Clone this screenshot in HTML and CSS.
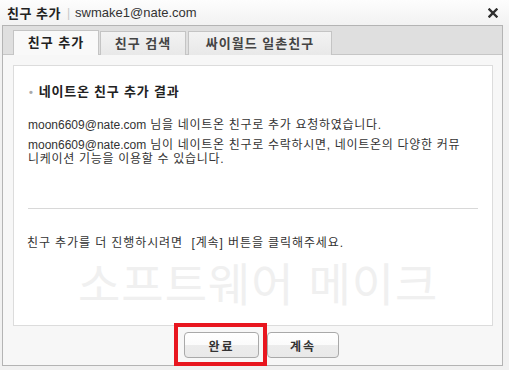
FILE: index.html
```html
<!DOCTYPE html>
<html>
<head>
  <meta charset="UTF-8" />
  <title>친구 추가</title>
  <link rel="stylesheet" href="styles.css">
</head>
<body>

  <div class="window">
    <!-- Title bar -->
    <div class="titlebar">
      <strong class="title">친구 추가</strong>
      <span class="sep">|</span>
      <span class="account">swmake1@nate.com</span>
      <span class="close" title="닫기">
        <svg width="10" height="10" viewBox="0 0 10 10">
          <path d="M1.5 1.5 L8.5 8.5 M8.5 1.5 L1.5 8.5" stroke="#2f2f2f" stroke-width="2.4" stroke-linecap="square" fill="none" />
        </svg>
      </span>
    </div>

    <div class="frame">
      <!-- Tabs -->
      <div class="tabs">
        <div class="tab active tab-add">친구 추가</div>
        <div class="tab tab-search">친구 검색</div>
        <div class="tab tab-cy">싸이월드 일촌친구</div>
      </div>

      <div class="content">
        <div class="box">
          <h4 class="box-title"><span class="dot">•</span>네이트온 친구 추가 결과</h4>
          <p class="msg first"><span class="email">moon6609@nate.com</span> 님을 네이트온 친구로 추가 요청하였습니다.</p>
          <p class="msg"><span class="email">moon6609@nate.com</span> 님이 네이트온 친구로 수락하시면, 네이트온의 다양한 커뮤<br>니케이션 기능을 이용할 수 있습니다.</p>
          <hr class="divider">
          <p class="msg next">친구 추가를 더 진행하시려면 &nbsp;[계속] 버튼을 클릭해주세요.</p>
          <div class="watermark">소프트웨어 메이크</div>
        </div>

        <div class="button-group">
          <button type="button" class="btn btn-done">완료</button>
          <button type="button" class="btn btn-next">계속</button>
        </div>
      </div>
    </div>

    <!-- highlight annotation -->
    <div class="highlight"></div>
  </div>

</body>
</html>
```

FILE: styles.css
```css
html, body {
  margin: 0;
  padding: 0;
}

body {
  font-family: "Liberation Sans", "Noto Sans CJK KR", sans-serif;
  font-size: 12px;
  color: #333;
  background: #f1f1f1;
}

.window {
  position: relative;
  width: 509px;
  height: 370px;
  background: #f1f1f1;
  overflow: hidden;
}

/* Title bar */
.titlebar {
  display: flex;
  align-items: center;
  height: 25px;
  padding-left: 7px;
  background: linear-gradient(#fdfdfd, #f2f2f2);
}

.title {
  font-size: 13px;
  color: #222;
  letter-spacing: 0.5px;
}

.sep {
  color: #c8c8c8;
  margin: 0 5px 0 6px;
  font-size: 12px;
}

.account {
  font-size: 13px;
  color: #333;
}

.close {
  margin-left: auto;
  margin-right: 11px;
  display: flex;
  align-items: center;
  cursor: pointer;
}

/* Frame */
.frame {
  margin-left: 2px;
  width: 499px;
  height: 339px;
  border: 1px solid #b4b4b4;
  background: #f7f7f7;
}

.tabs {
  display: flex;
  align-items: flex-end;
  gap: 1px;
  height: 28px;
  padding-left: 10px;
  background: #dfdfdf;
  border-bottom: 1px solid #c6c6c6;
}

.tab {
  box-sizing: border-box;
  height: 24px;
  margin-bottom: -1px;
  border: 1px solid #c4c4c4;
  border-bottom: none;
  background: linear-gradient(#f3f3f3, #e8e8e8);
  font-size: 13px;
  font-weight: bold;
  color: #444;
  text-align: center;
  line-height: 24px;
  letter-spacing: 1px;
  cursor: pointer;
}

.tab.active {
  background: #f9f9f9;
  color: #222;
  height: 25px;
}

.tab-add { width: 86px; }
.tab-search { width: 86px; }
.tab-cy { width: 144px; margin-left: 1px; }

.content {
  padding: 10px 9px 0 10px;
}

.box {
  box-sizing: border-box;
  height: 261px;
  padding: 18px 14px 0 14px;
  background: #fff;
  border: 1px solid #dcdcdc;
  overflow: hidden;
}

.box-title {
  margin: 0;
  font-size: 13px;
  line-height: 16px;
  color: #222;
  letter-spacing: 0.8px;
}

.dot {
  color: #aaa;
  font-size: 11px;
  margin: 0 5px 0 1px;
}

.msg {
  margin: 0;
  font-size: 12px;
  line-height: 14px;
  color: #333;
  letter-spacing: 0.7px;
}

.email {
  letter-spacing: 0;
}

.msg.first {
  margin-top: 18px;
  margin-bottom: 6px;
}

.divider {
  margin: 42px 0 0 0;
  border: none;
  border-top: 1px solid #d8d8d8;
  width: 450px;
}

.msg.next {
  margin-top: 27px;
  margin-left: -1px;
  letter-spacing: 0.9px;
}

.watermark {
  margin-top: 8px;
  margin-left: 50px;
  font-size: 46px;
  line-height: 54px;
  color: #f0f0f0;
  letter-spacing: 1px;
}

/* Buttons */
.button-group {
  display: flex;
  gap: 8px;
  padding-left: 171px;
  margin-top: 6px;
}

.btn {
  box-sizing: border-box;
  height: 26px;
  border: 1px solid #a9a9a9;
  border-radius: 4px;
  background: linear-gradient(#ffffff 0%, #fbfbfb 50%, #ececec 51%, #e9e9e9 100%);
  font-family: "Liberation Sans", "Noto Sans CJK KR", sans-serif;
  font-size: 12px;
  font-weight: bold;
  color: #333;
  letter-spacing: 2px;
  cursor: pointer;
}

.btn-done { width: 75px; }
.btn-next { width: 72px; }

.highlight {
  position: absolute;
  left: 174px;
  top: 323px;
  width: 85px;
  height: 35px;
  border: 4px solid #e8161f;
  pointer-events: none;
}
```
